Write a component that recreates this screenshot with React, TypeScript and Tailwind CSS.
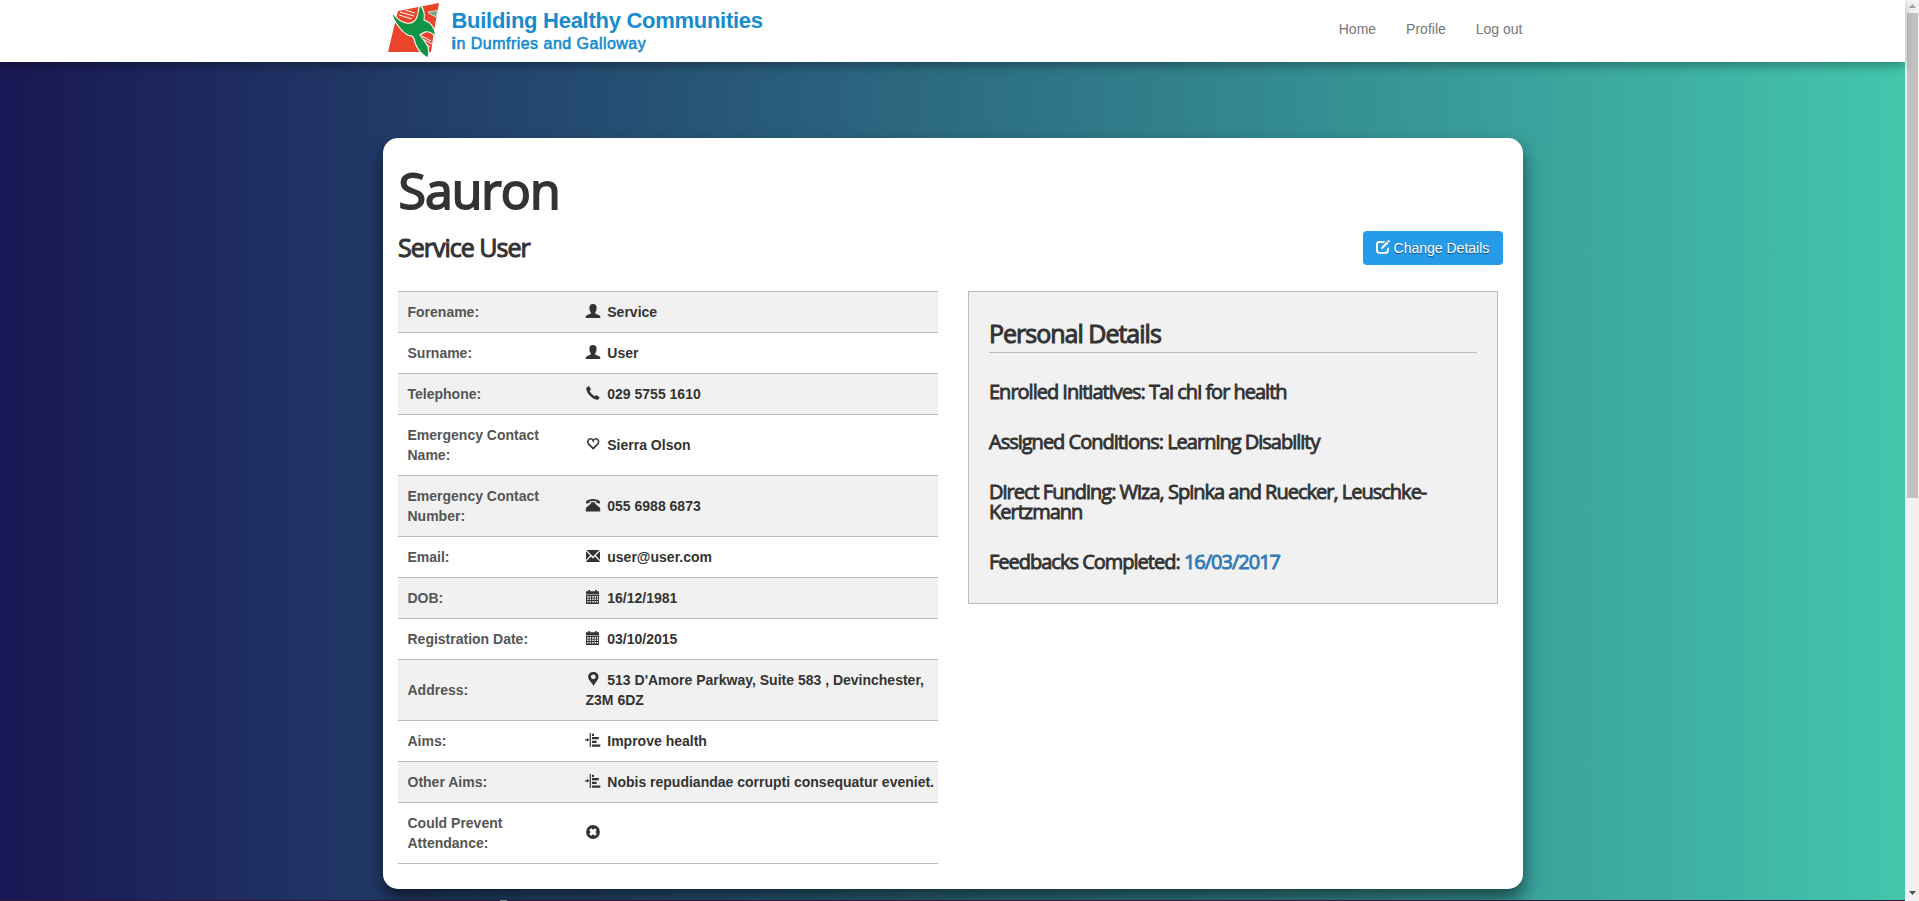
import React from "react";

type IconProps = { children: React.ReactNode };

const Glyph = ({ children }: IconProps) => (
  <svg viewBox="0 0 14 14" fill="currentColor" className="relative top-px inline-block size-3.5 overflow-visible align-baseline">
    {children}
  </svg>
);

const UserIcon = () => (
  <Glyph>
    <path d="M7 0C9.6 0 10.6 1.4 10.6 3.9 10.6 5.8 10.1 7.4 9.2 8.3V9.4L13.2 11.2Q14.3 11.7 14.3 13V14H-.3V13Q-.3 11.7.8 11.2L4.8 9.4V8.3C3.9 7.4 3.4 5.8 3.4 3.9 3.4 1.4 4.4 0 7 0Z" />
  </Glyph>
);

const PhoneIcon = () => (
  <Glyph>
    <path d="M.7 1.6 2.4.3Q3 0 3.4.5L4.8 3Q5 3.6 4.6 4L3.6 4.9C4.5 6.9 6.8 9.2 8.9 10.3L9.9 9.4Q10.4 9 10.9 9.3L13.2 10.9Q13.7 11.3 13.4 11.9L12.3 13.4Q11.8 14 11 13.8C6 12.6 1.2 7.9.2 2.9Q.1 2.1.7 1.6Z" />
  </Glyph>
);

const HeartIcon = () => (
  <Glyph>
    <path
      d="M7.2 11.6 2.5 6.9C.7 4.7 2.3 1.8 4.6 1.8 5.9 1.8 6.8 2.7 7.2 3.8 7.6 2.7 8.5 1.8 9.8 1.8 12.1 1.8 13.7 4.7 11.9 6.9Z"
      fill="none"
      stroke="currentColor"
      strokeWidth="1.6"
    />
  </Glyph>
);

const OldPhoneIcon = () => (
  <Glyph>
    <path d="M0 5V3.6C1.2 1.7 3.6.9 7 .9S12.8 1.7 14 3.6V5Q14 5.6 13.4 5.5L10.9 5.1Q10.4 5 10.4 4.5V3.3Q7 2.6 3.6 3.3V4.5Q3.6 5 3.1 5.1L.6 5.5Q0 5.6 0 5Z" />
    <path d="M5 4.3H9V5.4L13.6 9.6Q14.2 10 14.2 10.5V13.6H-.2V10.5Q-.2 10 .4 9.6L5 5.4Z" />
  </Glyph>
);

const MailIcon = () => (
  <Glyph>
    <path d="M.6 1H13.4L7 7.4ZM0 2 4.1 6.6 0 11ZM14 2V11L9.900 6.6ZM5.1 7.6 7 9.4 8.9 7.6 14 12.4V13H0V12.4Z" />
  </Glyph>
);

const CalendarIcon = () => (
  <Glyph>
    <path d="M0 1.3H2.4V0H4V1.3H9V0H10.6V1.3H13V4H0Z" />
    <path d="M0 4H13V5.2H0Z" opacity=".45" />
    <path
      fillRule="evenodd"
      d="M0 5.1H13V14H0ZM1.2 6.1V7.7H2.6V6.1ZM3.7 6.1V7.7H5.1V6.1ZM6.2 6.1V7.7H7.6V6.1ZM8.6 6.1V7.7H10V6.1ZM10.9 6.1V7.7H12.1V6.1ZM1.2 8.6V10.1H2.6V8.6ZM3.7 8.6V10.1H5.1V8.6ZM6.2 8.6V10.1H7.6V8.6ZM8.6 8.6V10.1H10V8.6ZM10.9 8.6V10.1H12.1V8.6ZM1.2 11V12.5H2.6V11ZM3.7 11V12.5H5.1V11ZM6.2 11V12.5H7.6V11ZM8.6 11V12.5H10V11ZM10.9 11V12.5H12.1V11Z"
    />
  </Glyph>
);

const PinIcon = () => (
  <Glyph>
    <path
      fillRule="evenodd"
      d="M7.3 0C10.2 0 12.5 2 12.5 4.8 12.5 8.2 9.2 10.6 7.5 14 6 10.6 2.2 8.2 2.2 4.8 2.2 2 4.4 0 7.3 0ZM7.3 2.4A2.4 2.4 0 1 0 7.3 7.2 2.4 2.4 0 1 0 7.3 2.4Z"
    />
  </Glyph>
);

const IndentIcon = () => (
  <Glyph>
    <path d="M3.7 0H4.9V14H3.7ZM6 .8H8V3H6ZM6 4H12.8V6.2H6ZM6 7.8H10.6V10H6ZM6 11.5H14.3V13.8H6ZM-1 6.2H1V4.9L3.4 6.8 1 8.7V7.4H-1Z" />
  </Glyph>
);

const RemoveCircleIcon = () => (
  <Glyph>
    <path
      fillRule="evenodd"
      d="M7 .1A6.9 6.9 0 1 1 7 13.9 6.9 6.9 0 1 1 7 .1ZM5.1 3.2 3.2 5.1 4.7 7 3.2 8.9 5.1 10.8 7 9.3 8.9 10.8 10.8 8.9 9.3 7 10.8 5.1 8.9 3.2 7 4.7Z"
    />
  </Glyph>
);

const EditIcon = () => (
  <Glyph>
    <path d="M9.6 1H3Q0 1 0 4V10.8Q0 13.8 3 13.8H9.8Q12.8 13.8 12.8 10.8V6.9L10.9 8.7V10.6Q10.9 11.9 9.6 11.9H3.3Q2 11.9 2 10.6V4.4Q2 3 3.3 3H7.6Z" />
    <path d="M5.4 6.9 10.8 1.6 12.4 3.2 7 8.6 4.9 9.2ZM11.4 1 12.2.2Q12.6-.2 13.1.3L13.8 1Q14.2 1.4 13.8 1.8L13 2.6Z" />
  </Glyph>
);

const details = [
  { label: "Forename:", Icon: UserIcon, value: "Service" },
  { label: "Surname:", Icon: UserIcon, value: "User" },
  { label: "Telephone:", Icon: PhoneIcon, value: "029 5755 1610" },
  { label: "Emergency Contact Name:", Icon: HeartIcon, value: "Sierra Olson" },
  { label: "Emergency Contact Number:", Icon: OldPhoneIcon, value: "055 6988 6873" },
  { label: "Email:", Icon: MailIcon, value: "user@user.com" },
  { label: "DOB:", Icon: CalendarIcon, value: "16/12/1981" },
  { label: "Registration Date:", Icon: CalendarIcon, value: "03/10/2015" },
  { label: "Address:", Icon: PinIcon, value: "513 D'Amore Parkway, Suite 583 , Devinchester, Z3M 6DZ" },
  { label: "Aims:", Icon: IndentIcon, value: "Improve health" },
  { label: "Other Aims:", Icon: IndentIcon, value: "Nobis repudiandae corrupti consequatur eveniet." },
  { label: "Could Prevent Attendance:", Icon: RemoveCircleIcon, value: "" },
];

const Logo = () => (
  <div className="flex h-full items-start">
    <svg viewBox="0 0 60 60" className="mt-px ml-1 h-[60px] w-[60px]">
      <path d="M11 10 52 2 47 30 44 51 1 51 7 26Z" fill="#ea452b" />
      <g stroke="#fff" strokeWidth="1" fill="none">
        <path d="M12 14 25 18M13 11 27 15M18 9 28 12" />
        <path d="M35 35 44 40M36 38 45 43M37 41 43 46" />
      </g>
      <path d="M41 11 51 9.500 49 16 43 13Z" fill="#6fa886" stroke="#fff" strokeWidth=".7" />
      <path
        d="M5 11C9 17 13 21 19 22 24 23 28 21 30 16 31.500 12 31 8 33 4 37 8 38 13 37 19 43 21 48 26 48.500 35 45 32 42 30 38 31 36 32 34 33 33 34 36 38 39 42 41 46 42 50 42 53 41 57 35 54 31 49 28.500 43 27.500 40 27.500 37 25 35 19 35 15 30 12 26 8 21 5 17 5 11Z"
        fill="#129447"
        stroke="#fff"
        strokeWidth="1.1"
      />
    </svg>
    <div className="ml-[5px] pt-2 text-[#188bce]">
      <div className="h-[27px] text-[22px] leading-[26px] font-bold tracking-[-0.280px] whitespace-nowrap">Building Healthy Communities</div>
      <div className="h-[18px] text-[16px] leading-[18px] tracking-[0.480px] whitespace-nowrap [-webkit-text-stroke:0.6px_#188bce]">
        <b>i</b>n Dumfries and Galloway
      </div>
    </div>
  </div>
);

const heading = "font-['Open_Sans',sans-serif] font-normal tracking-[-1px] text-[#333]";

export default function App() {
  return (
    <div className="flex h-[901px] w-full overflow-hidden font-['Liberation_Sans',Arial,sans-serif] text-sm leading-5 text-[#333]">
      <div className="flex min-w-0 flex-1 flex-col bg-linear-to-r from-[#191654] to-[#43c6ac]">
        <header className="z-10 h-[62px] shrink-0 bg-white shadow-[0_5px_8px_rgba(0,0,0,0.27)]">
          <div className="mx-auto flex h-full w-[1140px] justify-between">
            <Logo />
            <nav className="flex gap-[30px] pt-[19px] text-[#777]">
              <a>Home</a>
              <a>Profile</a>
              <a>Log out</a>
            </nav>
          </div>
        </header>

        <main className="mx-auto mt-[76px] h-[751px] w-[1140px] shrink-0 rounded-[15px] bg-white px-[15px] shadow-[0_10px_18px_rgba(0,0,0,0.55)]">
          <h1 className={heading + " pt-[27px] pl-px text-[50px] leading-[50px] [-webkit-text-stroke:1.800px_#333]"}>Sauron</h1>
          <div className="flex h-[76px] justify-between pt-4 pr-[5px]">
            <h2 className={heading + " pt-1 pl-[0.5px] text-[25px] leading-[25px] [-webkit-text-stroke:1px_#333]"}>Service User</h2>
            <button className="h-[34px] w-[140px] rounded-[4px] bg-[#269bea] text-white [text-shadow:0_1px_1px_rgba(0,0,0,0.5)]">
              <EditIcon /> Change Details
            </button>
          </div>
          <div className="flex items-start gap-[30px]">
            <div className="w-[540px] border-t border-[#bbb] font-bold">
              {details.map(({ label, Icon, value }) => (
                <div key={label} className="flex items-center border-b border-[#bbb] py-2.5 odd:bg-[#f1f1f1]">
                  <div className="w-[188px] shrink-0 pr-8 pl-2.5 text-[#555]">{label}</div>
                  <div className="min-w-0 flex-1">
                    <Icon /> &nbsp;{value}
                  </div>
                </div>
              ))}
            </div>
            <section className={heading + " h-[313px] w-[530px] border border-[#bbb] bg-[#f1f1f1] px-5 pt-[29px]"}>
              <h3 className="mb-[29px] border-b border-[#bbb] pb-1.5 pl-[0.5px] text-[25px] leading-[25px] [-webkit-text-stroke:1px_#333]">Personal Details</h3>
              <div className="flex flex-col gap-[30px] pl-[0.5px] text-[20px] leading-5 [-webkit-text-stroke:0.850px_currentColor]">
                <h4>Enrolled Initiatives: Tai chi for health</h4>
                <h4>Assigned Conditions: Learning Disability</h4>
                <h4>Direct Funding: Wiza, Spinka and Ruecker, Leuschke-Kertzmann</h4>
                <h4>
                  Feedbacks Completed: <a className="text-[#337ab7] [-webkit-text-stroke-color:#337ab7]">16/03/2017</a>
                </h4>
              </div>
            </section>
          </div>
        </main>
        <div className="z-10 mt-auto h-px bg-[#30173a]">
          <div className="ml-[500px] h-px w-[7px] bg-[#858585]" />
        </div>
      </div>

      <aside className="flex w-3.5 shrink-0 flex-col items-center bg-[#f1f1f1] pl-px">
        <svg viewBox="0 0 7 4" className="mt-1 h-1 w-[7px] fill-[#a0a0a0]">
          <path d="M0 4 3.5 0 7 4Z" />
        </svg>
        <div className="mt-[5px] h-[485px] w-[11px] bg-[#c1c1c1]" />
        <svg viewBox="0 0 7 4" className="mt-auto mb-1.5 h-1 w-[7px] fill-[#505050]">
          <path d="M0 0H7L3.5 4Z" />
        </svg>
      </aside>
    </div>
  );
}
